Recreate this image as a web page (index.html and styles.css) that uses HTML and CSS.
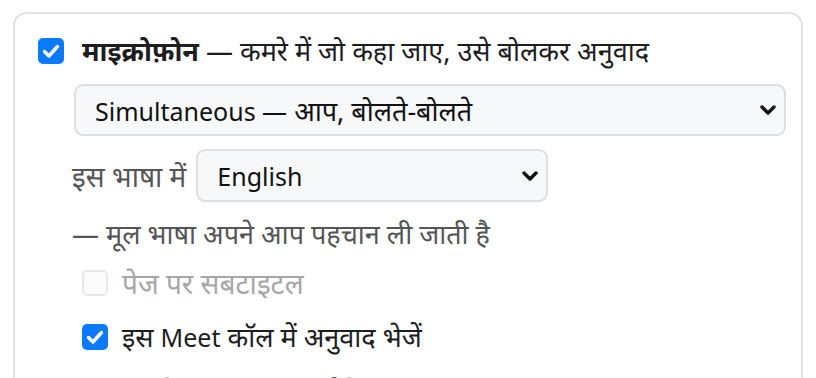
FILE: index.html
```html
<!DOCTYPE html>
<html lang="hi">
<head>
    <meta charset="UTF-8">
    <meta name="viewport" content="width=device-width, initial-scale=1.0">
    <title>माइक्रोफ़ोन अनुवाद</title>
    <link rel="stylesheet" href="styles.css">
</head>
<body>
    <div class="card">
        <div class="check-row main">
            <span class="box on">
                <svg viewBox="0 0 26 26" width="26" height="26"><path d="M6.5 13.5 L11 18 L19.5 8.5" fill="none" stroke="#fff" stroke-width="3.4" stroke-linecap="round" stroke-linejoin="round"/></svg>
            </span>
            <span class="label"><b>माइक्रोफ़ोन</b> — कमरे में जो कहा जाए, उसे बोलकर अनुवाद</span>
        </div>

        <div class="select wide">
            <span><span class="en">Simultaneous —</span> आप, बोलते-बोलते</span>
            <svg class="chev" viewBox="0 0 16 10" width="16" height="10"><path d="M2 2 L8 8 L14 2" fill="none" stroke="#111" stroke-width="3.4" stroke-linecap="round" stroke-linejoin="round"/></svg>
        </div>

        <div class="lang-row">
            <span class="muted">इस भाषा में</span>
            <div class="select short">
                <span class="en">English</span>
                <svg class="chev" viewBox="0 0 16 10" width="16" height="10"><path d="M2 2 L8 8 L14 2" fill="none" stroke="#111" stroke-width="3.4" stroke-linecap="round" stroke-linejoin="round"/></svg>
            </div>
        </div>

        <p class="note">— मूल भाषा अपने आप पहचान ली जाती है</p>

        <div class="check-row sub disabled">
            <span class="box"></span>
            <span class="label">पेज पर सबटाइटल</span>
        </div>

        <div class="check-row sub">
            <span class="box on">
                <svg viewBox="0 0 26 26" width="26" height="26"><path d="M6.5 13.5 L11 18 L19.5 8.5" fill="none" stroke="#fff" stroke-width="3.4" stroke-linecap="round" stroke-linejoin="round"/></svg>
            </span>
            <span class="label">इस <span class="en">Meet</span> कॉल में अनुवाद भेजें</span>
        </div>

        <p class="note sub-note">— दूसरे लोग अनुवाद सुनेंगे, मूल आवाज़ धीमी होगी</p>
    </div>
</body>
</html>
```

FILE: styles.css
```css
body {
    margin: 0;
    padding: 12px 13px;
    font-family: "Noto Sans", "Liberation Sans", sans-serif;
    color: #1d1d1f;
    background: #fff;
}

.card {
    border: 2px solid #e2e2e2;
    border-radius: 14px;
    padding: 23px 16px 40px 23px;
    height: 420px;
    box-sizing: border-box;
}

/* latin bits stay a little smaller than devanagari */
.en {
    font-size: 25px;
}

.check-row {
    display: flex;
    align-items: center;
    gap: 18px;
    font-size: 27px;
    line-height: 26px;
}

.check-row.main {
    height: 28px;
}

.check-row.sub {
    margin-left: 44px;
    gap: 14px;
}

.box {
    width: 26px;
    height: 26px;
    flex: none;
    box-sizing: border-box;
    border-radius: 5px;
    border: 2px solid #e8e8e8;
    background: #fbfbfb;
    display: block;
}

.box svg {
    display: block;
}

.box.on {
    border: none;
    background: #0a7aff;
}

.label b {
    font-weight: 700;
}

.disabled .label {
    color: #a6a6a6;
    font-size: 28px;
}

.select {
    display: flex;
    align-items: center;
    justify-content: space-between;
    box-sizing: border-box;
    background: #f7f8fa;
    border: 2px solid #dedede;
    border-radius: 9px;
    font-size: 27px;
    color: #111;
    padding: 0 8px 0 19px;
}

.select.wide {
    margin: 19px 0 0 36px;
    width: 712px;
    height: 52px;
}

.select.short {
    width: 352px;
    height: 53px;
}

.chev {
    display: block;
}

.lang-row {
    display: flex;
    align-items: center;
    gap: 10px;
    margin: 13px 0 0 34px;
    height: 53px;
}

.muted {
    font-size: 28px;
    color: #555;
}

.note {
    margin: 15px 0 0 34px;
    font-size: 27px;
    color: #555;
    line-height: 34px;
}

.check-row.disabled {
    margin-top: 19px;
}

.check-row.disabled + .check-row {
    margin-top: 28px;
}

.sub-note {
    margin: 25px 0 0 60px;
}
```
